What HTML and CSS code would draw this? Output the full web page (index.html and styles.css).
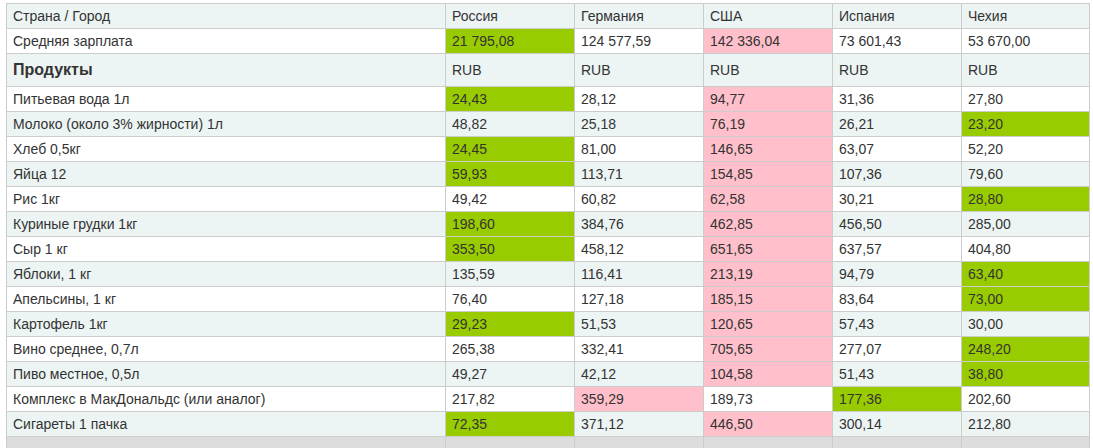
FILE: index.html
```html
<!DOCTYPE html>
<html lang="ru">
<head>
<meta charset="utf-8">
<title>Цены</title>
<link rel="stylesheet" href="styles.css">
</head>
<body>
<div class="wrap">
<table class="prices">
<colgroup>
<col class="c-name"><col class="c-val"><col class="c-val"><col class="c-val"><col class="c-val"><col class="c-last">
</colgroup>
<tbody>
<tr class="alt"><td>Страна / Город</td><td>Россия</td><td>Германия</td><td>США</td><td>Испания</td><td>Чехия</td></tr>
<tr><td>Средняя зарплата</td><td class="lo">21 795,08</td><td>124 577,59</td><td class="hi">142 336,04</td><td>73 601,43</td><td>53 670,00</td></tr>
<tr class="alt sect"><td class="sect-title">Продукты</td><td>RUB</td><td>RUB</td><td>RUB</td><td>RUB</td><td>RUB</td></tr>
<tr><td>Питьевая вода 1л</td><td class="lo">24,43</td><td>28,12</td><td class="hi">94,77</td><td>31,36</td><td>27,80</td></tr>
<tr class="alt"><td>Молоко (около 3% жирности) 1л</td><td>48,82</td><td>25,18</td><td class="hi">76,19</td><td>26,21</td><td class="lo">23,20</td></tr>
<tr><td>Хлеб 0,5кг</td><td class="lo">24,45</td><td>81,00</td><td class="hi">146,65</td><td>63,07</td><td>52,20</td></tr>
<tr class="alt"><td>Яйца 12</td><td class="lo">59,93</td><td>113,71</td><td class="hi">154,85</td><td>107,36</td><td>79,60</td></tr>
<tr><td>Рис 1кг</td><td>49,42</td><td>60,82</td><td class="hi">62,58</td><td>30,21</td><td class="lo">28,80</td></tr>
<tr class="alt"><td>Куриные грудки 1кг</td><td class="lo">198,60</td><td>384,76</td><td class="hi">462,85</td><td>456,50</td><td>285,00</td></tr>
<tr><td>Сыр 1 кг</td><td class="lo">353,50</td><td>458,12</td><td class="hi">651,65</td><td>637,57</td><td>404,80</td></tr>
<tr class="alt"><td>Яблоки, 1 кг</td><td>135,59</td><td>116,41</td><td class="hi">213,19</td><td>94,79</td><td class="lo">63,40</td></tr>
<tr><td>Апельсины, 1 кг</td><td>76,40</td><td>127,18</td><td class="hi">185,15</td><td>83,64</td><td class="lo">73,00</td></tr>
<tr class="alt"><td>Картофель 1кг</td><td class="lo">29,23</td><td>51,53</td><td class="hi">120,65</td><td>57,43</td><td>30,00</td></tr>
<tr><td>Вино среднее, 0,7л</td><td>265,38</td><td>332,41</td><td class="hi">705,65</td><td>277,07</td><td class="lo">248,20</td></tr>
<tr class="alt"><td>Пиво местное, 0,5л</td><td>49,27</td><td>42,12</td><td class="hi">104,58</td><td>51,43</td><td class="lo">38,80</td></tr>
<tr><td>Комплекс в МакДональдс (или аналог)</td><td>217,82</td><td class="hi">359,29</td><td>189,73</td><td class="lo">177,36</td><td>202,60</td></tr>
<tr class="alt"><td>Сигареты 1 пачка</td><td class="lo">72,35</td><td>371,12</td><td class="hi">446,50</td><td>300,14</td><td>212,80</td></tr>
<tr class="grey"><td>&nbsp;</td><td>&nbsp;</td><td>&nbsp;</td><td>&nbsp;</td><td>&nbsp;</td><td>&nbsp;</td></tr>
</tbody>
</table>
</div>
</body>
</html>
```

FILE: styles.css
```css
html, body {
  margin: 0;
  padding: 0;
  background: #ffffff;
}

body {
  font-family: "Liberation Sans", Arial, sans-serif;
  font-size: 14px;
  color: #333333;
}

.wrap {
  padding: 3px 0 0 6px;
}

.prices {
  border-collapse: collapse;
  table-layout: fixed;
  width: 1083px;
}

.c-name { width: 439px; }
.c-val { width: 129px; }
.c-last { width: 128px; }

.prices td {
  border: 1px solid #cccccc;
  padding: 3px 6px;
  line-height: 18px;
  height: 18px;
  white-space: nowrap;
  overflow: hidden;
  vertical-align: middle;
}

.prices tr.alt td {
  background: #edf5f4;
}

.prices tr.sect td {
  padding-top: 6px;
  padding-bottom: 6px;
  line-height: 20px;
  height: 20px;
}

.prices td.sect-title {
  font-weight: bold;
  font-size: 16px;
}

.prices tr td.lo {
  background: #99cc00;
}

.prices tr td.hi {
  background: #ffc0cb;
}

.prices tr.grey td {
  background: #dddddd;
}
```
